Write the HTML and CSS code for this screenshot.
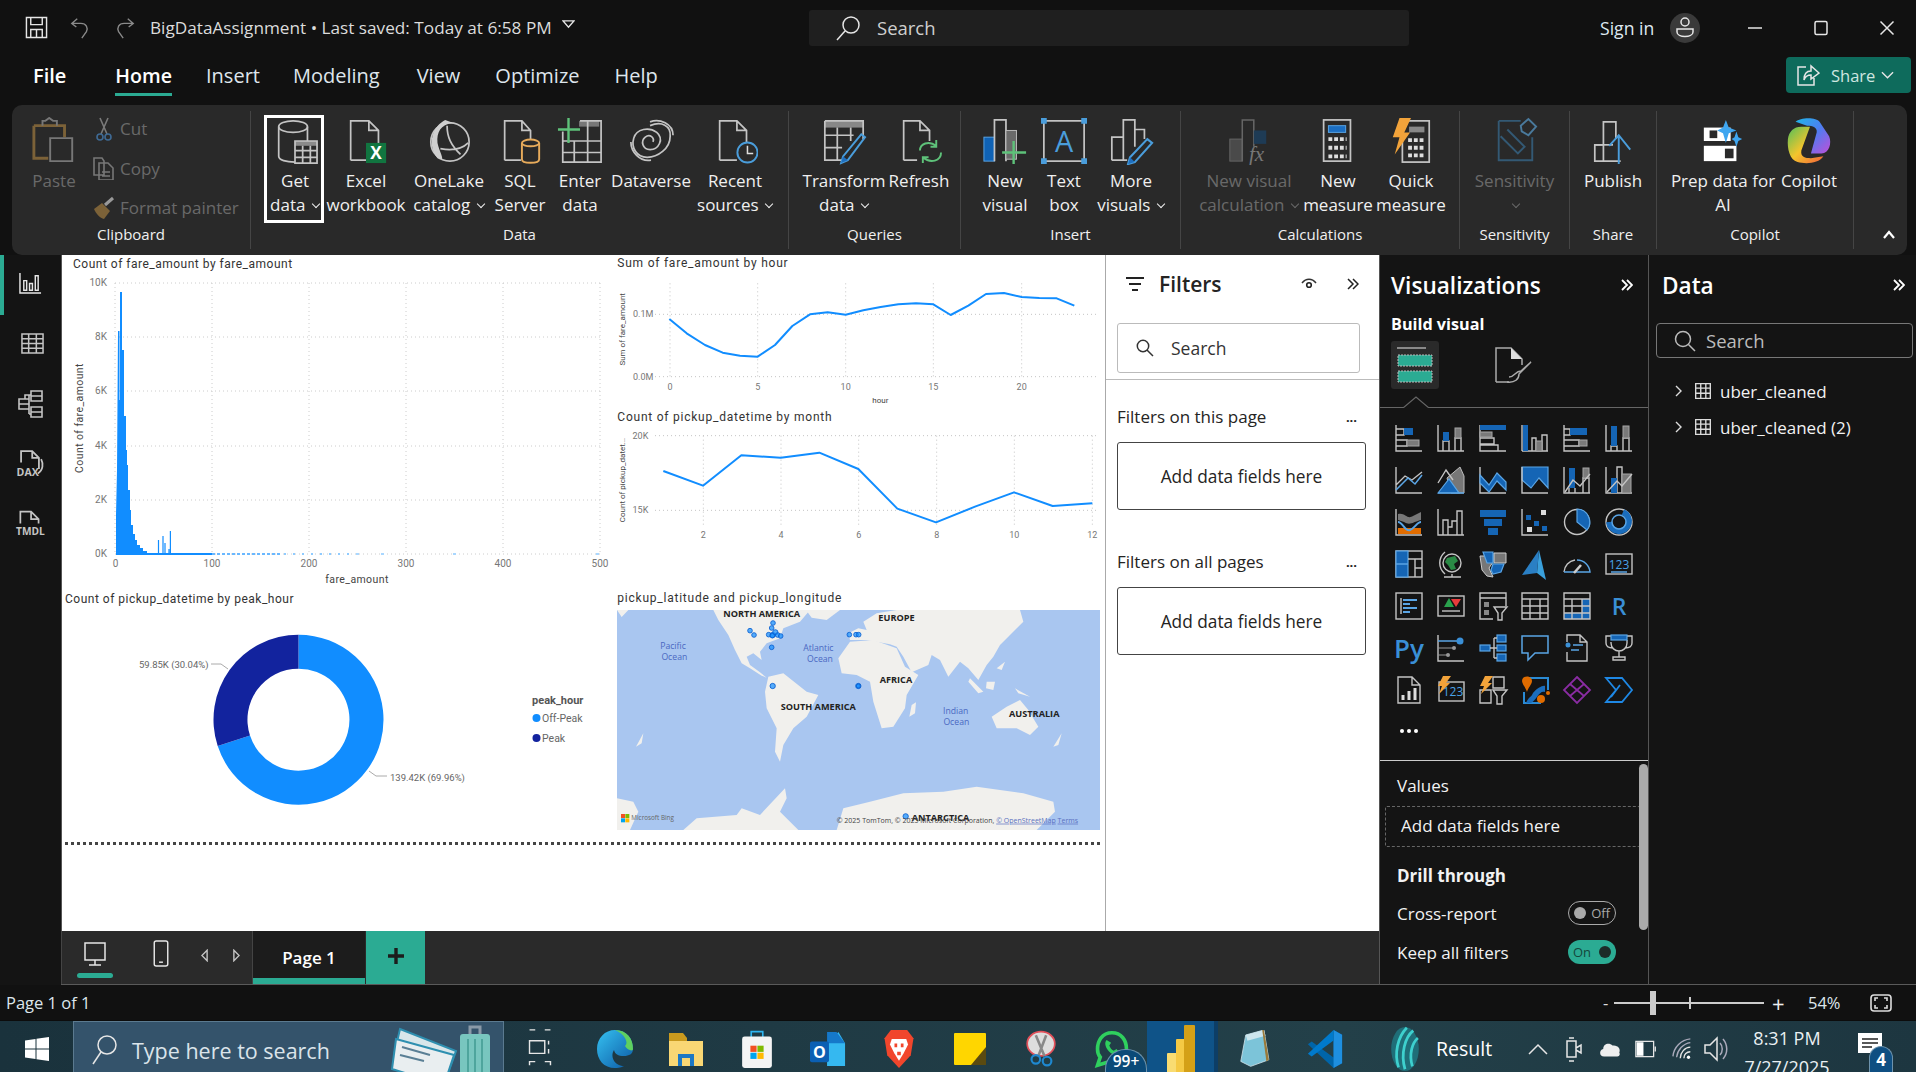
FILE: index.html
```html
<!DOCTYPE html>
<html lang="en">
<head>
<meta charset="utf-8">
<title>BigDataAssignment - Power BI Desktop</title>
<link rel="stylesheet" href="styles.css">
</head>
<body>
<div class="app">
  <header class="titlebar">
    <div class="tb-left">
      <svg class="ic-save" viewBox="0 0 24 24"><path class="w" d="M1.5 1.5H22.5V22.5H1.5ZM6 1.5V9H18V1.5M6 22.5V14H18V22.5M12 14V22"/></svg>
      <svg class="ic-undo" viewBox="0 0 24 24"><path class="dim" d="M9 2L3 7L8 11M3 7H13C19 7 21 12 19 16L14 23"/></svg>
      <svg class="ic-undo" viewBox="0 0 24 24"><path class="dim" d="M15 2L21 7L16 11M21 7H11C5 7 3 12 5 16L10 23"/></svg>
      <span class="doc-title">BigDataAssignment&nbsp;•&nbsp;Last saved: Today at 6:58 PM</span>
      <svg class="ic-drop" viewBox="0 0 14 10"><path class="w" d="M1 1H13L7 8Z"/></svg>
    </div>
    <div class="top-search">
      <svg class="ic-tsearch" viewBox="0 0 26 26"><circle class="w" cx="16" cy="10" r="8"/><path class="w" d="M10 16L2 25"/></svg>
      <span>Search</span>
    </div>
    <div class="tb-right">
      <span class="signin">Sign in</span>
      <span class="avatar"><svg viewBox="0 0 30 30"><circle class="w" cx="15" cy="9" r="4"/><path class="w" d="M7 16H23V19C23 25 7 25 7 19Z"/></svg></span>
      <svg class="win-ctl first" viewBox="0 0 16 16"><path class="w" d="M1 8H15"/></svg>
      <svg class="win-ctl" viewBox="0 0 16 16"><rect class="w" x="2" y="1.5" width="12" height="13" rx="1.5"/></svg>
      <svg class="win-ctl" viewBox="0 0 16 16"><path class="w" d="M1.5 1.5L14.5 14.5M14.5 1.5L1.5 14.5"/></svg>
    </div>
  </header>

  <nav class="tabs">
    <span class="tab file">File</span>
    <span class="tab active">Home</span>
    <span class="tab t-insert">Insert</span>
    <span class="tab t-model">Modeling</span>
    <span class="tab">View</span>
    <span class="tab">Optimize</span>
    <span class="tab">Help</span>
    <span class="share">
      <svg viewBox="0 0 24 24"><path class="w" d="M10 4H2V22H18V15M8 17C8 11 11 8 15 8V3L23 10L15 16V12C12 12 9 14 8 17Z"/></svg>
      <span>Share</span>
      <svg class="share-chev" viewBox="0 0 14 10"><path class="w" d="M1 2L7 8L13 2"/></svg>
    </span>
  </nav>

  <section class="ribbon">
    <div class="group g-clip">
      <div class="btns">
        <div class="btn b-paste dis">
          <svg class="ri" viewBox="0 0 48 48"><path fill="none" stroke="#7c6238" stroke-width="3" d="M3 8H35V20M3 8V42H18"/><path fill="none" stroke="#777" stroke-width="2" d="M12 8V3H15L19 0L23 3H27V8M20 21H43V45H20Z"/></svg>
          <span>Paste</span>
        </div>
        <div class="small-col">
          <div class="small dis"><svg viewBox="0 0 24 24"><path fill="none" stroke="#7a7a7a" stroke-width="1.6" d="M8 1L15 17M16 1L9 17"/><circle cx="8" cy="20" r="3" fill="none" stroke="#3f6a94" stroke-width="1.6"/><circle cx="16" cy="20" r="3" fill="none" stroke="#3f6a94" stroke-width="1.6"/></svg><span>Cut</span></div>
          <div class="small dis"><svg viewBox="0 0 24 24"><path fill="none" stroke="#777" stroke-width="1.6" d="M2 2H10L12 5V19H2ZM7 7H16L21 12V24H7ZM10 16H18M10 20H18"/></svg><span>Copy</span></div>
          <div class="small dis"><svg viewBox="0 0 24 24"><path fill="#7c6238" d="M2 13L10 7L18 15L12 23C8 22 4 18 2 13Z"/><path fill="none" stroke="#999" stroke-width="3" d="M13 9L21 2"/></svg><span>Format painter</span></div>
        </div>
      </div>
      <div class="g-label">Clipboard</div>
    </div>

    <div class="group g-data">
      <div class="btns">
        <div class="btn w66 focus">
          <svg class="ri" viewBox="0 0 48 48"><ellipse class="s" cx="22" cy="9" rx="15" ry="6"/><path class="s" d="M7 9V40C7 44 15 46 24 46M37 9V24"/><rect x="24" y="24" width="23" height="5" fill="#8a8a8a"/><path class="s" d="M24 24H47V47H24ZM24 34H47M24 41H47M32 29V47M40 29V47"/></svg>
          <span>Get<br>data <i class="chev"></i></span>
        </div>
        <div class="btn w76">
          <svg class="ri" viewBox="0 0 48 48"><path class="s" d="M8 44V3H27L37 13V26M8 44H24M27 3V13H37" /><rect x="24" y="26" width="21" height="21" fill="#117540"/><text class="xl" x="34.5" y="43">X</text></svg>
          <span>Excel<br>workbook</span>
        </div>
        <div class="btn w90">
          <svg class="ri" viewBox="0 0 48 48"><circle class="s" cx="25" cy="25" r="20"/><path fill="#cfcfcf" d="M20 2C8 8 0 26 12 42C22 47 14 36 12 26C11 15 15 7 28 5Z"/><path class="s" d="M15 32C26 34 36 34 44 26M22 8C22 20 26 28 36 38"/></svg>
          <span>OneLake<br>catalog <i class="chev"></i></span>
        </div>
        <div class="btn w52">
          <svg class="ri" viewBox="0 0 48 48"><path class="s" d="M8 44V3H26L35 13V22M8 44H25M26 3V13H35"/><ellipse cx="35" cy="26" rx="9" ry="3.5" fill="none" stroke="#e7ab5b" stroke-width="2"/><path fill="none" stroke="#e7ab5b" stroke-width="2" d="M26 26V43C26 48 44 48 44 43V26"/></svg>
          <span>SQL<br>Server</span>
        </div>
        <div class="btn w68">
          <svg class="ri" viewBox="0 0 48 48"><rect x="23" y="3" width="21" height="6" fill="#777"/><path class="s" d="M6 14V46H46V3H24M6 24H46M6 36H46M18 24V46M32 3V46"/><path fill="none" stroke="#5ec27a" stroke-width="2.5" d="M12 0V26M1 12H24"/></svg>
          <span>Enter<br>data</span>
        </div>
        <div class="btn w74">
          <svg class="ri" viewBox="0 0 48 48"><path class="s" d="M23 8C35 3 45 8 44 19C44 32 31 41 20 41C9 41 3 31 6 21C9 11 22 9 30 15C38 22 32 33 23 33C15 33 13 24 18 20C23 16 28 21 26 25"/><path class="s" d="M23 4C33 0 47 6 47 18M3 25C3 35 12 46 24 44"/></svg>
          <span>Dataverse</span>
        </div>
        <div class="btn w94">
          <svg class="ri" viewBox="0 0 48 48"><path class="s" d="M8 44V3H26L36 13V26M8 44H26M26 3V13H36"/><circle cx="37" cy="36" r="10.5" fill="#2a2a2a" stroke="#4a9ddb" stroke-width="2"/><path fill="none" stroke="#ddd" stroke-width="1.6" d="M37 29V37H43"/></svg>
          <span>Recent<br>sources <i class="chev"></i></span>
        </div>
      </div>
      <div class="g-label">Data</div>
    </div>

    <div class="group g-query">
      <div class="btns">
        <div class="btn w84">
          <svg class="ri" viewBox="0 0 48 48"><rect x="4" y="3" width="40" height="7" fill="#888"/><path class="s" d="M4 3H44V22M4 3V44H22M4 18H34M4 31H22M17 10V44M31 10V24"/><path fill="none" stroke="#4a9ddb" stroke-width="2" d="M42 17L46 20L28 44L21 47L23 40Z"/><path fill="#1e6fc0" d="M21 47L23 40L28 44Z"/></svg>
          <span>Transform<br>data <i class="chev"></i></span>
        </div>
        <div class="btn w66">
          <svg class="ri" viewBox="0 0 48 48"><path class="s" d="M8 44V3H25L35 13V24M8 44H22M25 3V13H35"/><path fill="none" stroke="#5ec27a" stroke-width="2" d="M25 34C25 27 34 23 42 29M47 36C47 45 36 48 28 41M42 23V30H36M28 47V41H34"/></svg>
          <span>Refresh</span>
        </div>
      </div>
      <div class="g-label">Queries</div>
    </div>

    <div class="group g-insert">
      <div class="btns">
        <div class="btn w68">
          <svg class="ri" viewBox="0 0 48 48"><rect x="2" y="20" width="11" height="25" fill="#0f62b5" stroke="#5aa5e5"/><path class="s" d="M13 45V2H25V45"/><rect x="25" y="13" width="11" height="30" fill="#6a6a6a" stroke="#bbb"/><path fill="none" stroke="#5ec27a" stroke-width="2.5" d="M33 24V48M21 36H46"/></svg>
          <span>New<br>visual</span>
        </div>
        <div class="btn w50">
          <svg class="ri" viewBox="0 0 48 48"><rect class="s" x="3" y="3" width="42" height="42"/><rect x="0" y="0" width="6" height="6" fill="#4a9ddb"/><rect x="42" y="0" width="6" height="6" fill="#4a9ddb"/><rect x="0" y="42" width="6" height="6" fill="#4a9ddb"/><rect x="42" y="42" width="6" height="6" fill="#4a9ddb"/><text class="aa" x="24" y="35">A</text></svg>
          <span>Text<br>box</span>
        </div>
        <div class="btn w84">
          <svg class="ri" viewBox="0 0 48 48"><path class="s" d="M4 44V20H16M16 44V2H28V30M28 12H38V22M4 44H20"/><path fill="none" stroke="#4a9ddb" stroke-width="2.2" d="M41 22L46 26L28 46L21 48L23 41Z"/><path fill="#1e6fc0" d="M21 48L23 41L28 46Z"/></svg>
          <span>More<br>visuals <i class="chev"></i></span>
        </div>
      </div>
      <div class="g-label">Insert</div>
    </div>

    <div class="group g-calc">
      <div class="btns">
        <div class="btn w116 dis">
          <svg class="ri" viewBox="0 0 48 48"><rect x="4" y="22" width="13" height="23" fill="#4a4a4a" stroke="#666"/><path fill="none" stroke="#666" stroke-width="1.6" d="M17 45V2H29V30"/><rect x="29" y="13" width="13" height="14" fill="#1e3b55"/><text class="fx" x="24" y="45">fx</text></svg>
          <span>New visual<br>calculation <i class="chev"></i></span>
        </div>
        <div class="btn w62">
          <svg class="ri" viewBox="0 0 48 48"><rect class="s" x="9" y="2" width="28" height="43"/><rect x="14" y="8" width="18" height="7" fill="#1b6ec2" stroke="#5aa5e5"/><path stroke="#ddd" stroke-width="4" stroke-dasharray="4 2" d="M14 22H33M14 31H33M14 40H33"/></svg>
          <span>New<br>measure</span>
        </div>
        <div class="btn w84">
          <svg class="ri" viewBox="0 0 48 48"><rect class="s" x="15" y="3" width="28" height="43"/><rect x="22" y="9" width="16" height="6" fill="#888"/><path stroke="#ddd" stroke-width="4" stroke-dasharray="4 2" d="M21 23H39M21 31H39M21 39H39"/><path fill="#f2a33a" d="M12 0H24L17 15H23L7 38L12 20H5Z"/></svg>
          <span>Quick<br>measure</span>
        </div>
      </div>
      <div class="g-label">Calculations</div>
    </div>

    <div class="group g-sens">
      <div class="btns">
        <div class="btn wfull dis">
          <svg class="ri" viewBox="0 0 48 48"><path fill="none" stroke="#335974" stroke-width="2" d="M7 3H30M42 20V44H7V3M16 12L34 30L27 37L9 19"/><path fill="none" stroke="#4a7a9c" stroke-width="2" d="M30 8L38 1L46 9L38 18L31 14Z"/></svg>
          <span>Sensitivity<br><i class="chev"></i></span>
        </div>
      </div>
      <div class="g-label">Sensitivity</div>
    </div>

    <div class="group g-share">
      <div class="btns">
        <div class="btn wfull">
          <svg class="ri" viewBox="0 0 48 48"><path class="s" d="M5 45V28H14V45ZM14 45V4H27V22M14 45H32"/><path class="s" d="M5 28H24"/><path fill="none" stroke="#4a9ddb" stroke-width="2" d="M30 48V18M20 29L30 18L42 33"/></svg>
          <span>Publish</span>
        </div>
      </div>
      <div class="g-label">Share</div>
    </div>

    <div class="group g-copilot">
      <div class="btns">
        <div class="btn w126">
          <svg class="ri" viewBox="0 0 48 48"><rect x="4" y="10" width="28" height="14" fill="#fff"/><rect x="4" y="29" width="34" height="16" fill="#fff"/><rect x="10" y="13" width="8" height="8" fill="#2a2a2a"/><rect x="26" y="32" width="9" height="10" fill="#2a2a2a"/><path fill="#3fa6f0" d="M27 2L30 10L38 13L30 16L27 26L24 16L18 13L24 10Z"/><path fill="#3fa6f0" d="M38 14L40 20L44 22L40 24L38 30L36 24L33 22L36 20Z"/></svg>
          <span>Prep data for<br>AI</span>
        </div>
        <div class="btn w46">
          <svg class="ri" viewBox="0 0 48 48"><defs><linearGradient id="cp1" x1="0" y1="0" x2="1" y2="1"><stop offset="0" stop-color="#1fb6e8"/><stop offset=".5" stop-color="#4f7cf0"/><stop offset="1" stop-color="#c04fd8"/></linearGradient><linearGradient id="cp2" x1="0" y1="0" x2="1" y2="1"><stop offset="0" stop-color="#52c05a"/><stop offset=".5" stop-color="#f4c52c"/><stop offset="1" stop-color="#f0603a"/></linearGradient></defs><path fill="url(#cp1)" d="M10 4C15-1 32-1 35 4L45 19C48 26 45 37 37 37H26L32 15C33 10 28 8 22 8Z"/><path fill="url(#cp2)" d="M2 22C3 14 8 9 16 9H25L16 34C15 41 20 42 26 42L39 40C34 48 20 48 12 46C4 44 1 32 2 22Z"/></svg>
          <span class="nw">Copilot</span>
        </div>
      </div>
      <div class="g-label">Copilot</div>
    </div>

    <div class="collapse"><svg viewBox="0 0 14 10"><path fill="none" stroke="#fff" stroke-width="2.2" d="M2 8L7 2L12 8"/></svg></div>
  </section>

  <main class="main">
    <aside class="leftnav">
      <div class="nav-item on"><svg viewBox="0 0 24 24"><path class="w" d="M1 1V22H23M5 9H8V19H5ZM11 12H14V19H11ZM17 4H20V19H17Z"/></svg></div>
      <div class="nav-item"><svg viewBox="0 0 24 24"><path class="g" d="M1 2H23V22H1ZM1 7H23M1 12H23M1 17H23M8 2V22M16 2V22"/></svg></div>
      <div class="nav-item nav-model"><svg viewBox="0 0 26 28"><path class="g" d="M2 9H12V19H2ZM2 14H12M12 5V24M8 9V5H12H14M12 24H14M14 1H25V11H14ZM14 6H25M14 17H25V27H14ZM14 22H25"/></svg></div>
      <div class="nav-item nav-doc"><svg viewBox="0 0 26 26"><path class="g" d="M5 12V2H15L21 8V18M15 2V8H21M23 9C25 13 25 19 20 22"/><text class="navt" x="1" y="24">DAX</text></svg></div>
      <div class="nav-item nav-doc"><svg viewBox="0 0 28 26"><path class="g" d="M5 13V2H15L22 9V13M15 2V9H22"/><text class="navt" x="1" y="24">TMDL</text></svg></div>
    </aside>

    <div class="center">
      <div class="report-row">
        <div class="canvas">
          <svg class="visual v-hist" viewBox="65 256 545 334">
            <text class="title" x="73" y="268">Count of fare_amount by fare_amount</text>
            <path class="grid" d="M115 283H600M115 337H600M115 391H600M115 446H600M115 500H600M115 554H600M115 283V554M212 283V554M309 283V554M406 283V554M503 283V554M600 283V554"/>
            <g class="axis ar">
              <text x="107" y="286">10K</text><text x="107" y="340">8K</text><text x="107" y="394">6K</text><text x="107" y="449">4K</text><text x="107" y="503">2K</text><text x="107" y="557">0K</text>
            </g>
            <g class="axis am">
              <text x="115.5" y="567">0</text><text x="212" y="567">100</text><text x="309" y="567">200</text><text x="406" y="567">300</text><text x="503" y="567">400</text><text x="600" y="567">500</text>
            </g>
            <text class="axis-title am" x="357" y="583">fare_amount</text>
            <text class="axis-title am" transform="translate(83 418) rotate(-90)">Count of fare_amount</text>
            <path fill="#118dff" d="M116 555V515L117 470L118 331H119.5V400H120V292H122V350H124V416H126V450H127V465H128V490H130V510H131V525H133V534H135V540H137V545H140V548H143V551H147V553H212V555Z"/>
            <path stroke="#118dff" stroke-width="1.2" d="M158.5 554V540M163 554V536M165 554V543M170.4 554V531M169 554V549"/>
            <path stroke="#6ab8ff" stroke-width="2" stroke-dasharray="3 2" d="M212 554H282"/>
            <path stroke="#8fcbff" stroke-width="2" stroke-dasharray="2 7" d="M284 554H350"/>
            <path stroke="#a9d7ff" stroke-width="2" d="M356 554H359M381 554H384M453 554H456M596 554H599"/>
          </svg>

          <svg class="visual v-lines" viewBox="0 18 1485 1002">
            <text class="title3" x="22" y="52">Sum of fare_amount by hour</text>
            <path class="grid3" d="M135 193H1465M135 380H1465M180 100V380M443 100V380M707 100V380M970 100V380M1235 100V380"/>
            <g class="axis3 ar"><text x="130" y="200">0.1M</text><text x="130" y="390">0.0M</text></g>
            <g class="axis3 am"><text x="180" y="420">0</text><text x="443" y="420">5</text><text x="707" y="420">10</text><text x="970" y="420">15</text><text x="1235" y="420">20</text></g>
            <text class="axt3 am" x="811" y="458">hour</text>
            <text class="axt3 am" transform="translate(45 238) rotate(-90)">Sum of fare_amount</text>
            <polyline class="line3" points="178,207 230,250 285,285 338,308 390,317 443,320 495,285 547,228 600,193 653,187 707,194 760,181 812,171 865,163 918,160 970,163 1022,195 1075,167 1128,132 1182,129 1235,141 1288,144 1340,145 1393,167"/>

            <text class="title3" x="22" y="512">Count of pickup_datetime by month</text>
            <path class="grid3" d="M135 557H1460M135 781H1460M280 557V830M513 557V830M746 557V830M980 557V830M1213 557V830M1447 557V830"/>
            <g class="axis3 ar"><text x="115" y="566">20K</text><text x="115" y="788">15K</text></g>
            <g class="axis3 am"><text x="280" y="863">2</text><text x="513" y="863">4</text><text x="746" y="863">6</text><text x="980" y="863">8</text><text x="1213" y="863">10</text><text x="1447" y="863">12</text></g>
            <text class="axt3 am" transform="translate(45 690) rotate(-90)">Count of pickup_datet...</text>
            <polyline class="line3" points="160,663 279,707 394,616 512,623 628,608 745,657 862,776 978,817 1095,770 1212,727 1328,768 1447,760"/>
          </svg>

          <svg class="visual v-donut" viewBox="65 585 545 250">
            <text class="title" x="65" y="603">Count of pickup_datetime by peak_hour</text>
            <path fill="#118dff" d="M298.5 634.7A85 85 0 1 1 217.7 746.1L250 735.6A51 51 0 1 0 298.5 668.7Z"/>
            <path fill="#12239e" d="M298.5 634.7A85 85 0 0 0 217.7 746.1L250 735.6A51 51 0 0 1 298.5 668.7Z"/>
            <path class="leader" d="M211 664H221L228 669M369 771L376 776H387"/>
            <text class="dl" x="139" y="668">59.85K (30.04%)</text>
            <text class="dl" x="390" y="781">139.42K (69.96%)</text>
            <text class="lg-t" x="532" y="704">peak_hour</text>
            <circle cx="536.5" cy="718" r="4" fill="#118dff"/><text class="lg" x="542" y="722">Off-Peak</text>
            <circle cx="536.5" cy="738" r="4" fill="#12239e"/><text class="lg" x="542" y="742">Peak</text>
          </svg>

          <svg class="visual v-map" viewBox="0 0 1485 795">
            <text class="title3" x="22" y="52">pickup_latitude and pickup_longitude</text>
            <rect x="21" y="75" width="1449" height="660" fill="#a9c6f0"/>
            <g fill="#f1f0ed">
              <path d="M21 75H55L35 96ZM310 75H600L570 110L520 130L510 160L470 175L450 200L455 225L430 205L410 215L420 240L450 262L470 278L455 272L420 250L395 235L375 195L355 150L325 105Z"/>
              <path d="M588 75H690L650 105L605 98Z"/>
              <path d="M760 110L800 85L860 75H1230L1240 110L1200 150L1170 180L1150 215L1130 240L1105 285L1075 250L1050 230L1015 275L990 225L965 210L955 240L905 262L880 215L860 185L840 178L770 165L720 165L715 145L745 130L770 135Z"/>
              <path d="M720 170L790 165L860 190L885 245L925 270L890 330L885 370L850 425L815 430L790 350L780 290L740 270L695 265L685 220Z"/>
              <path d="M475 275L520 265L590 320L625 330L590 395L550 430L520 480L510 530L495 500L500 430L470 370L465 320Z"/>
              <path d="M1145 395L1190 365L1230 345L1255 375L1285 425L1260 450L1220 430L1160 430Z"/>
              <path d="M905 360L918 352L915 385L898 395ZM1080 280L1120 320L1105 325L1075 290ZM1130 290H1155L1150 315L1128 310ZM1215 310L1260 335L1225 325ZM1160 250L1185 230L1175 255ZM1355 445L1330 485L1345 480ZM100 445L78 485L95 475Z"/>
              <path d="M680 735L700 670L780 650L880 625L1000 620L1100 605L1240 625L1330 650L1335 680L1280 735Z"/>
              <path d="M220 735L260 700L380 690L395 670L450 690L525 610L530 640L510 680L565 735Z"/>
              <path d="M21 640L70 650L85 680L60 735H21Z"/>
            </g>
            <g class="mapt">
              <text x="340" y="95">NORTH AMERICA</text><text x="805" y="109">EUROPE</text><text x="809" y="295">AFRICA</text><text x="512" y="374">SOUTH AMERICA</text><text x="1197" y="395">AUSTRALIA</text><text x="905" y="707">ANTARCTICA</text>
            </g>
            <g class="ocean">
              <text x="189" y="192">Pacific</text><text x="193" y="225">Ocean</text><text x="625" y="198">Atlantic</text><text x="630" y="231">Ocean</text><text x="1037" y="388">Indian</text><text x="1039" y="420">Ocean</text>
            </g>
            <g class="dots">
              <circle cx="420" cy="137" r="7"/><circle cx="432" cy="150" r="7"/><circle cx="489" cy="114" r="7"/><circle cx="485" cy="129" r="7"/><circle cx="476" cy="149" r="7"/><circle cx="488" cy="150" r="8"/><circle cx="496" cy="142" r="8"/><circle cx="487" cy="152" r="7"/><circle cx="503" cy="150" r="7"/><circle cx="512" cy="153" r="7"/><circle cx="485" cy="187" r="7"/><circle cx="718" cy="149" r="7"/><circle cx="738" cy="149" r="7"/><circle cx="746" cy="149" r="7"/><circle cx="488" cy="303" r="8"/><circle cx="745" cy="303" r="8"/><circle cx="745" cy="303" r="6"/><circle cx="887" cy="694" r="8"/>
            </g>
            <rect x="33" y="687" width="12" height="12" fill="#f25022"/><rect x="46" y="687" width="12" height="12" fill="#7fba00"/><rect x="33" y="700" width="12" height="12" fill="#00a4ef"/><rect x="46" y="700" width="12" height="12" fill="#ffb900"/>
            <text class="bing" x="64" y="706">Microsoft Bing</text>
            <text class="attr" x="680" y="713">© 2025 TomTom, © 2025 Microsoft Corporation, <tspan class="lnk">© OpenStreetMap</tspan>  <tspan class="lnk">Terms</tspan></text>
          </svg>

          <div class="page-rule"></div>
        </div>

        <aside class="filters">
          <div class="f-head">
            <svg class="f-ic" viewBox="0 0 20 16"><path stroke="#222" stroke-width="2.2" d="M1 2H19M4 8H16M7 14H13"/></svg>
            <span class="f-title">Filters</span>
            <svg class="f-eye" viewBox="0 0 16 12"><path fill="none" stroke="#333" stroke-width="1.5" d="M1 5C5 0 11 0 15 5"/><circle cx="8" cy="7" r="2.3" fill="none" stroke="#222" stroke-width="1.6"/></svg>
            <svg class="f-chev" viewBox="0 0 12 12"><path fill="none" stroke="#222" stroke-width="1.5" d="M1 1L6 6L1 11M6 1L11 6L6 11"/></svg>
          </div>
          <div class="f-search">
            <svg viewBox="0 0 18 18"><circle cx="7" cy="7" r="5.7" fill="none" stroke="#333" stroke-width="1.5"/><path stroke="#333" stroke-width="1.5" d="M11 11L17 17"/></svg>
            <span>Search</span>
          </div>
          <div class="f-rule"></div>
          <div class="f-label"><span>Filters on this page</span><span class="f-more">...</span></div>
          <div class="f-well">Add data fields here</div>
          <div class="f-label second"><span>Filters on all pages</span><span class="f-more">...</span></div>
          <div class="f-well">Add data fields here</div>
        </aside>
      </div>

      <div class="pagebar">
        <div class="views">
          <span class="view on"><svg viewBox="0 0 24 24"><path class="w" d="M2 1H22V18H2ZM12 18V23M6 23H18"/></svg></span>
          <span class="view phone"><svg viewBox="0 0 16 28"><rect class="w" x="1" y="1" width="14" height="26" rx="2"/><path class="w" d="M6 23H10"/></svg></span>
          <svg class="arr first-arr" viewBox="0 0 8 14"><path class="g" d="M7 1L1 7L7 13Z"/></svg>
          <svg class="arr" viewBox="0 0 8 14"><path class="g" d="M1 1L7 7L1 13Z"/></svg>
        </div>
        <div class="page-tab">Page 1</div>
        <div class="add-page"><svg viewBox="0 0 16 16"><path stroke="#1c1c1c" stroke-width="3.4" d="M8 0V16M0 8H16"/></svg></div>
      </div>
    </div>

    <aside class="viz">
      <div class="pane-head"><span>Visualizations</span><svg viewBox="0 0 12 12"><path fill="none" stroke="#fff" stroke-width="1.8" d="M1 1L6 6L1 11M6 1L11 6L6 11"/></svg></div>
      <div class="build">Build visual</div>
      <div class="build-tabs">
        <span class="bt-on"><svg viewBox="0 0 36 36"><path stroke="#aaa" stroke-width="1.5" d="M0 1H29"/><rect x="1" y="8" width="34" height="11" fill="#2bab93" stroke="#bbb" stroke-dasharray="2 1"/><rect x="1" y="24" width="34" height="11" fill="#2bab93" stroke="#bbb" stroke-dasharray="2 1"/></svg></span>
        <svg class="bt-fmt" viewBox="0 0 38 36"><path fill="none" stroke="#aaa" stroke-width="1.5" d="M1 35V1H16L27 12V18M1 35H14"/><path fill="#ddd" d="M16 1L27 12H16Z"/><path fill="none" stroke="#aaa" stroke-width="1.5" d="M12 35C20 36 24 32 24 27L36 15L26 24C20 24 20 30 14 30"/></svg>
      </div>
      <div class="viz-rule"><svg viewBox="0 0 26 12"><path fill="#141414" stroke="#666" stroke-width="1.2" d="M0 12L13 1L26 12"/></svg></div>

      <div class="viz-grid">
        <svg viewBox="0 0 28 28"><path class="o" d="M1 1V27H27M1 5H9V11H1M1 16H12V22H1"/><rect class="bf" x="9" y="4" width="9" height="7"/><rect class="gf" x="12" y="16" width="12" height="6"/></svg>
        <svg viewBox="0 0 28 28"><path class="o" d="M1 1V27H27M6 27V17H12V27M18 27V14H24V27"/><rect class="bf" x="6" y="8" width="6" height="9"/><rect class="gf" x="18" y="4" width="6" height="10"/></svg>
        <svg viewBox="0 0 28 28"><path class="o" d="M1 1V27H27M1 14H15V20H1M1 21H19V27"/><rect class="bf" x="1" y="1" width="26" height="5"/><rect class="gf" x="1" y="8" width="12" height="5"/></svg>
        <svg viewBox="0 0 28 28"><path class="o" d="M1 27H27M11 27V14H15V27M21 27V11H26V27"/><rect class="bf" x="2" y="1" width="5" height="26"/><path class="o" d="M1 1V27"/><rect class="gf" x="15" y="17" width="6" height="10"/></svg>
        <svg viewBox="0 0 28 28"><path class="o" d="M1 1V27H27M1 5H7V11H1M1 16H16V22H1"/><rect class="bf" x="7" y="4" width="17" height="7"/><rect class="gf" x="16" y="16" width="8" height="6"/></svg>
        <svg viewBox="0 0 28 28"><path class="o" d="M1 1V27H27M6 27V22H12V27M18 27V14H24V27"/><rect class="bf" x="6" y="2" width="6" height="20"/><rect class="gf" x="18" y="2" width="6" height="12"/></svg>

        <svg viewBox="0 0 28 28"><path class="o" d="M1 1V27H27M1 19L10 10L17 14L27 6"/><path class="lb" d="M1 24L13 12L20 18L27 9"/></svg>
        <svg viewBox="0 0 28 28"><path fill="#777" stroke="#bbb" d="M10 12L23 1L27 10V27H14Z"/><path class="o" d="M1 17L9 4L16 14"/><path class="bf ls" d="M1 27L12 13L22 27Z"/><path class="lb" d="M1 27H27"/></svg>
        <svg viewBox="0 0 28 28"><path class="o" d="M1 1V27H27"/><path class="bf ls" d="M1 9L10 19L18 7L27 16V24L18 15L10 26L1 17Z"/></svg>
        <svg viewBox="0 0 28 28"><path class="bf ls" d="M1 1H27V22L18 12L10 22L1 14Z"/><path class="o" d="M1 1V27H27"/></svg>
        <svg viewBox="0 0 28 28"><path class="o" d="M1 1V27H27M6 27V22M12 27V22M20 27V12H26V27"/><rect class="bf" x="6" y="2" width="6" height="20"/><rect class="gf" x="20" y="2" width="6" height="10"/><path class="o" d="M2 26L10 14L17 20L27 8"/></svg>
        <svg viewBox="0 0 28 28"><path class="o" d="M1 1V27H27M12 27V1H17V27"/><rect class="bf" x="6" y="12" width="6" height="15"/><rect class="gf" x="17" y="8" width="9" height="19"/><path class="o" d="M2 26L12 15L17 20L27 8"/></svg>

        <svg viewBox="0 0 28 28"><path class="o" d="M1 1V27H27"/><path fill="#777" d="M3 6C10 4 12 12 18 8L26 4V12C18 14 15 18 9 14L3 12Z"/><path fill="#e06c00" d="M3 20H26V26H3Z"/><path fill="none" stroke="#5aa5e5" stroke-width="2" d="M3 14C8 14 10 24 15 22C20 20 22 14 26 14"/></svg>
        <svg viewBox="0 0 28 28"><path class="o" d="M1 1V27H27M6 27V12H11V27M11 27V19H15V13H20V27M20 13V3H25V27"/></svg>
        <svg viewBox="0 0 28 28"><rect class="bf" x="1" y="2" width="26" height="7" /><rect class="bf" x="5" y="11" width="18" height="7"/><rect class="bf" x="9" y="20" width="10" height="7"/></svg>
        <svg viewBox="0 0 28 28"><path class="o" d="M1 1V27H27"/><rect class="bf" x="5" y="7" width="5" height="5"/><rect x="20" y="2" width="5" height="5" fill="#ddd"/><rect x="6" y="19" width="5" height="5" fill="#ddd"/><rect class="bf" x="13" y="13" width="5" height="5"/><rect class="bf" x="21" y="18" width="5" height="5"/></svg>
        <svg viewBox="0 0 28 28"><circle class="o" cx="14" cy="14" r="12.5"/><path class="bf ls" d="M14 1A13 13 0 0 1 24 22L14 14Z"/></svg>
        <svg viewBox="0 0 28 28"><circle class="o" cx="14" cy="14" r="13"/><path fill="none" stroke="#1a6dbd" stroke-width="6" d="M18 4A10 10 0 1 1 4 14"/><circle class="lb" cx="14" cy="14" r="7"/></svg>

        <svg viewBox="0 0 28 28"><rect class="o" x="1" y="1" width="26" height="26"/><rect class="bf ls" x="1" y="1" width="12" height="26"/><path class="lb" d="M1 14H13"/><path class="o" d="M13 9H27M20 9V27M20 18H27"/></svg>
        <svg viewBox="0 0 28 28"><circle class="o" cx="15" cy="13" r="9"/><path fill="#2a8a45" d="M10 8L18 6L21 11L17 14L19 19L14 20L11 15L8 12Z"/><path class="o" d="M8 2C1 8 1 18 8 24M15 24V27M7 27H24"/></svg>
        <svg viewBox="0 0 28 28"><path fill="#777" stroke="#ccc" d="M1 6H6L7 3H14V12L10 18L14 27L8 26L3 20Z"/><path fill="#777" stroke="#ccc" d="M15 3H27V13H15Z"/><path class="bf ls" d="M4 2H14V13H8ZM14 14H25L22 22L14 24L12 20Z"/></svg>
        <svg viewBox="0 0 28 28"><path fill="#3aa0dc" d="M18 0L25 30L16 23Z"/><path fill="#2a7fc4" d="M18 0L1 25L16 23Z"/></svg>
        <svg viewBox="0 0 28 28"><path class="o" d="M1 22A13 13 0 0 1 12 10"/><path class="lb" d="M14 10A13 13 0 0 1 27 22H1"/><path stroke="#ccc" stroke-width="2.5" d="M11 23L18 15"/></svg>
        <svg viewBox="0 0 28 28"><rect class="o" x="1" y="4" width="26" height="20"/><text class="n123" x="14" y="19">123</text><path class="lb" d="M6 22H22"/></svg>

        <svg viewBox="0 0 28 28"><rect class="o" x="1" y="1" width="26" height="26"/><path class="o" d="M6 6V22"/><path stroke="#5aa5e5" stroke-width="2" d="M8 8H22M8 12H15M8 16H22M8 20H15"/></svg>
        <svg viewBox="0 0 28 28"><rect class="o" x="1" y="4" width="26" height="20"/><path fill="#2aa14d" d="M7 15L12 6L17 15Z"/><path fill="#e83b3b" d="M14 7H24L19 15Z"/><path class="o" d="M5 19H23"/></svg>
        <svg viewBox="0 0 28 28"><path class="o" d="M14 27H1V1H27V14M1 6H27"/><rect x="5" y="10" width="5" height="5" fill="#888"/><rect x="5" y="18" width="5" height="5" fill="#888"/><path class="o" d="M15 15H28L23 21V28H19V21Z"/></svg>
        <svg viewBox="0 0 28 28"><path class="o" d="M1 1H27V27H1ZM1 7H27M1 14H27M1 21H27M9 7V27M19 7V27"/></svg>
        <svg viewBox="0 0 28 28"><rect class="bf" x="19" y="7" width="8" height="20"/><rect class="bf" x="1" y="21" width="18" height="6"/><path class="o" d="M1 1H27V27H1ZM1 7H27M1 14H27M1 21H27M9 7V27M19 7V27"/></svg>
        <span class="lang r">R</span>

        <span class="lang py">Py</span>
        <svg viewBox="0 0 28 28"><path class="o" d="M1 1V27H27"/><path class="lb" d="M1 7H21"/><circle cx="23" cy="7" r="3.5" fill="#3a8fd6"/><path stroke="#999" d="M1 14H16M1 21H10"/><circle cx="17" cy="14" r="2" fill="#999"/><circle cx="11" cy="21" r="2" fill="#999"/></svg>
        <svg viewBox="0 0 28 28"><rect class="bf ls" x="1" y="11" width="10" height="6"/><rect class="bf ls" x="18" y="1" width="9" height="7"/><rect class="bf ls" x="18" y="11" width="9" height="6"/><rect class="bf ls" x="18" y="20" width="9" height="7"/><path class="o" d="M11 14H18M15 4V24M15 4H18M15 24H18"/></svg>
        <svg viewBox="0 0 28 28"><path class="lb" d="M1 2H27V19H14L7 26V19H1Z"/></svg>
        <svg viewBox="0 0 28 28"><path class="o" d="M4 8V1H17L24 8V27H4V18M17 1V8H24"/><circle cx="5" cy="11" r="2.5" fill="#3a8fd6"/><path class="lb" d="M10 11H20M8 16H16"/></svg>
        <svg viewBox="0 0 28 28"><path class="o" d="M6 2H1V9C1 13 5 14 8 14M22 2H27V9C27 13 23 14 20 14M14 17V23M8 26H20V23H8ZM6 8V9C6 14 10 17 14 17C18 17 22 14 22 9V6"/><rect class="bf ls" x="6" y="1" width="16" height="5"/></svg>

        <svg viewBox="0 0 28 28"><path class="o" d="M3 1H17L25 9V27H3ZM17 1V9H25"/><path stroke="#ddd" stroke-width="3" d="M8 24V19M14 24V15M20 24V12"/></svg>
        <svg viewBox="0 0 28 28"><rect class="o" x="2" y="6" width="25" height="19"/><text class="n123" x="16" y="20">123</text><path fill="#f2a33a" d="M6 0H14L9 7H13L2 18L5 10H1Z"/></svg>
        <svg viewBox="0 0 28 28"><path class="o" d="M14 1H25V12H14ZM1 14H12V27H1ZM14 14H28L23 20V28H18V20Z"/><path fill="#f2a33a" d="M6 0H14L9 7H13L2 18L5 10H1Z"/></svg>
        <svg viewBox="0 0 28 28"><path fill="none" stroke="#2a8ad4" stroke-width="2" d="M8 2H27V14M3 16V27H20"/><path fill="#1a6dbd" d="M5 27C8 20 10 22 12 17C16 12 22 9 24 10L24 16C18 14 16 24 10 27Z"/><path fill="#e06c00" d="M1 5C1-1 11-1 11 5C11 8 7 12 6 16C5 12 1 8 1 5Z"/><circle cx="20" cy="23" r="4" fill="#e06c00"/><circle cx="27" cy="17" r="2" fill="#e06c00"/></svg>
        <svg viewBox="0 0 28 28"><path fill="none" stroke="#8a2ca3" stroke-width="1.8" d="M14 1L27 14L14 27L1 14ZM7 8L21 20M21 8L7 20"/></svg>
        <svg viewBox="0 0 28 28"><path fill="none" stroke="#1e88e5" stroke-width="1.8" d="M1 2H17L27 14L17 26H1L11 14ZM6 21L15 9"/></svg>
      </div>
      <div class="viz-more"><i></i><i></i><i></i></div>
      <div class="well-rule"></div>
      <div class="sec-label">Values</div>
      <div class="dash-well">Add data fields here</div>
      <div class="sec-bold">Drill through</div>
      <div class="toggle-row r1"><span>Cross-report</span><span class="toggle off"><i></i>Off</span></div>
      <div class="toggle-row r2"><span>Keep all filters</span><span class="toggle on">On<i></i></span></div>
      <div class="v-scroll"></div>
    </aside>

    <aside class="data">
      <div class="pane-head"><span>Data</span><svg viewBox="0 0 12 12"><path fill="none" stroke="#fff" stroke-width="1.8" d="M1 1L6 6L1 11M6 1L11 6L6 11"/></svg></div>
      <div class="d-search"><svg viewBox="0 0 22 22"><circle cx="9" cy="9" r="7.5" fill="none" stroke="#bbb" stroke-width="1.5"/><path stroke="#bbb" stroke-width="1.5" d="M14.5 14.5L21 21"/></svg><span>Search</span></div>
      <div class="d-row first"><svg class="d-ch" viewBox="0 0 8 12"><path fill="none" stroke="#ddd" stroke-width="1.4" d="M1 1L6 6L1 11"/></svg><svg class="d-tb" viewBox="0 0 16 16"><path fill="none" stroke="#ddd" stroke-width="1.2" d="M1.5 1.5H14.5V14.5H1.5ZM1.5 5.5H14.5M1.5 10H14.5M6 1.5V14.5M10.5 1.5V14.5"/></svg><span>uber_cleaned</span></div>
      <div class="d-row"><svg class="d-ch" viewBox="0 0 8 12"><path fill="none" stroke="#ddd" stroke-width="1.4" d="M1 1L6 6L1 11"/></svg><svg class="d-tb" viewBox="0 0 16 16"><path fill="none" stroke="#ddd" stroke-width="1.2" d="M1.5 1.5H14.5V14.5H1.5ZM1.5 5.5H14.5M1.5 10H14.5M6 1.5V14.5M10.5 1.5V14.5"/></svg><span>uber_cleaned (2)</span></div>
    </aside>
  </main>

  <footer class="status">
    <span class="page-count">Page 1 of 1</span>
    <div class="zoomer">
      <span class="zm">-</span>
      <div class="slider"><i class="thumb"></i><i class="tick"></i></div>
      <span class="zp">+</span>
      <span class="zpct">54%</span>
      <svg class="fit" viewBox="0 0 22 18"><rect x="1" y="1" width="20" height="16" rx="3" fill="none" stroke="#ddd" stroke-width="1.6"/><path fill="none" stroke="#ddd" stroke-width="1.6" d="M5 7V4H8M14 4H17V7M17 11V14H14M8 14H5V11"/></svg>
    </div>
  </footer>

  <div class="taskbar">
    <div class="start"><svg viewBox="0 0 24 24"><path fill="#fff" d="M0 3.5L10.5 2V11.5H0ZM11.5 1.8L24 0V11.5H11.5ZM0 12.5H10.5V22L0 20.5ZM11.5 12.5H24V24L11.5 22.2Z"/></svg></div>
    <div class="tsearch">
      <svg class="ts-ic" viewBox="0 0 26 30"><circle class="w" cx="16" cy="10" r="9"/><path class="w" d="M10 17L2 29"/></svg>
      <span>Type here to search</span>
      <svg class="ts-art" viewBox="0 0 100 50"><path fill="#d8e6ea" stroke="#2e8fb0" stroke-width="2" d="M6 4L62 26L52 54L0 30Z"/><path fill="#e9eef0" stroke="#2e8fb0" stroke-width="2" d="M2 14L60 30L50 60L-2 44Z"/><path stroke="#5a7f95" stroke-width="2" d="M8 22L36 30M6 30L30 36"/><rect x="66" y="9" width="30" height="43" rx="3" fill="#78c6bf"/><path fill="none" stroke="#8a9aa8" stroke-width="3" d="M76 9V2H86V9"/><path stroke="#4ea59d" stroke-width="2" d="M74 14V52M81 14V52M88 14V52"/></svg>
    </div>
    <span class="ti tview"><svg viewBox="0 0 26 42"><path class="w" d="M2 1H8M18 1H24M2 13H18V27H2ZM22 13V17M22 22V27M2 40V36H8M18 36H24V40" transform="scale(1 .95)"/></svg></span>
    <span class="ti gap"><svg viewBox="0 0 36 38"><defs><linearGradient id="ed" x1="0" y1="0" x2="1" y2="1"><stop offset="0" stop-color="#35c1f1"/><stop offset="1" stop-color="#0c59a4"/></linearGradient></defs><path fill="url(#ed)" d="M18 0C30 0 36 9 36 19C36 24 32 26 27 26C21 26 18 24 17 20C13 26 17 36 27 36C23 38 20 38 18 38C7 38 0 30 0 19C0 8 8 0 18 0Z"/><path fill="#5fd05f" d="M36 19C36 9 30 0 18 0C28 4 32 13 28 16C30 20 36 22 36 19Z"/></svg></span>
    <span class="ti"><svg viewBox="0 0 36 38"><path fill="#c99a1e" d="M1 3H15L19 8V14H1Z"/><path fill="#f9d774" d="M1 11H35V36H1Z"/><path fill="#1d78c4" d="M10 24H26V36H22V28H14V36H10Z"/></svg></span>
    <span class="ti"><svg viewBox="0 0 36 46"><path fill="none" stroke="#2eb5f0" stroke-width="2" d="M11 9V2H25V9"/><rect y="8" width="36" height="38" rx="3" fill="#f4f4f4"/><rect x="10" y="19" width="7.5" height="7.5" fill="#f25022"/><rect x="18.5" y="19" width="7.5" height="7.5" fill="#7fba00"/><rect x="10" y="27.5" width="7.5" height="7.5" fill="#00a4ef"/><rect x="18.5" y="27.5" width="7.5" height="7.5" fill="#ffb900"/></svg></span>
    <span class="ti"><svg viewBox="0 0 38 40"><path fill="#35b8f0" d="M18 14L30 2L37 14V38H18Z"/><path fill="#1578c9" d="M18 2H28L37 14H18Z"/><rect y="12" width="20" height="22" rx="2" fill="#0b5fb3"/><text class="olk" x="10" y="29">O</text></svg></span>
    <span class="ti"><svg viewBox="0 0 34 42"><path fill="#f1462c" d="M8 0H26L33 9L30 28L17 42L4 28L1 9Z"/><path fill="#fff" d="M9 10H25L27 16L22 26L17 34L12 26L7 16Z"/><path fill="#f1462c" d="M12 15H15V19H12ZM19 15H22V19H19ZM15 24H19V28H15Z"/></svg></span>
    <span class="ti sticky"><svg viewBox="0 0 32 32"><rect width="32" height="32" rx="1" fill="#ffd600"/><path fill="#5a4a10" d="M32 14V32H17Z"/></svg></span>
    <span class="ti"><svg viewBox="0 0 36 44"><ellipse cx="18" cy="16" rx="16" ry="14" fill="#ddd" stroke="#e2505a" stroke-width="2"/><path stroke="#888" stroke-width="3" d="M12 6L22 30M24 6L15 30"/><circle cx="12" cy="34" r="5" fill="none" stroke="#1e88d0" stroke-width="2.5"/><circle cx="25" cy="36" r="5" fill="none" stroke="#1e88d0" stroke-width="2.5"/></svg></span>
    <span class="ti whats"><svg viewBox="0 0 38 42"><path fill="none" stroke="#2fd05e" stroke-width="4" d="M19 3C8 3 3 12 3 21C3 25 4 28 6 30L3 39L13 36C16 38 18 38 20 38C30 38 35 29 35 21C35 11 29 3 19 3Z"/><path fill="#2fd05e" d="M13 11C10 14 12 20 16 24C20 28 26 29 28 26L24 21L21 23C19 22 17 20 16 17L18 14Z"/></svg><b class="badge99">99+</b></span>
    <span class="ti pbi"><svg viewBox="0 0 28 48"><rect x="0" y="28" width="10" height="20" rx="1" fill="#f9dc72"/><rect x="9" y="14" width="10" height="34" rx="1" fill="#f5c944"/><rect x="17" y="0" width="11" height="48" rx="1" fill="#d4a017"/></svg></span>
    <span class="ti"><svg viewBox="0 0 36 46"><path fill="#7cc4d9" stroke="#cfe3ea" d="M8 6L30 0L36 36L14 44L2 38Z"/><path fill="#cde6ee" d="M8 6L30 0L32 7L10 13Z"/><path fill="#9a7a3a" d="M30 0L36 36L33 38L28 0Z"/></svg></span>
    <span class="ti"><svg viewBox="0 0 36 40"><path fill="#0065a9" d="M27 0L36 5V35L27 40L0 15L4 12L27 29Z"/><path fill="#1e8fe0" d="M27 0L36 5V35L27 40V29V11Z"/><path fill="#007acc" d="M27 11L4 28L0 25L27 0Z"/></svg></span>
    <span class="result"><svg viewBox="0 0 32 50"><ellipse cx="16" cy="25" rx="15" ry="24" fill="#1f6e78"/><path stroke="#3ed0ce" stroke-width="3" fill="none" d="M9 45C4 30 8 12 18 2M16 47C11 30 16 12 25 5M24 44C20 30 24 18 30 13"/></svg><span>Result</span></span>
    <div class="tray">
      <span class="t1"><svg viewBox="0 0 20 12"><path class="w" d="M1 11L10 2L19 11"/></svg></span>
      <span class="t2"><svg viewBox="0 0 18 26"><path class="w" d="M2 5V21H11V5ZM11 12L16 9V17L11 14M4 2H9M4 25H9"/></svg></span>
      <span class="t3"><svg viewBox="0 0 26 22"><path fill="#eee" d="M6 20C0 20 0 12 5 11C5 5 12 3 16 7C22 6 26 11 24 15C26 19 22 20 20 20Z"/></svg></span>
      <span class="t4"><svg viewBox="0 0 26 22"><path class="w" d="M1 2H22V20H1ZM24 8V14"/><rect x="2" y="3" width="8" height="16" fill="#fff"/></svg></span>
      <span class="t5"><svg viewBox="0 0 24 24"><path fill="none" stroke="#aab" stroke-width="1.5" d="M1 20C2 10 10 2 20 1M5 21C6 13 12 6 20 5"/><path class="w" d="M9 22C9 16 14 10 20 10M13 22C13 18 16 15 20 15"/><circle cx="18" cy="21" r="1.8" fill="#fff"/></svg></span>
      <span class="t6"><svg viewBox="0 0 24 28"><path class="w" d="M1 10H6L13 3V25L6 18H1Z"/><path fill="none" stroke="#aab" stroke-width="1.5" d="M16 8C19 11 19 17 16 20M19 4C24 10 24 18 19 24"/></svg></span>
      <span class="clock"><span>8:31 PM</span><span>7/27/2025</span></span>
      <span class="notif"><svg viewBox="0 0 24 26"><path fill="#fff" d="M0 0H24V20H0Z"/><path stroke="#222" stroke-width="1.6" d="M4 6H20M4 10H20M4 14H14"/></svg><b class="badge4">4</b></span>
    </div>
  </div>
</div>
</body>
</html>
```

FILE: styles.css
```css
* { box-sizing: border-box; }
*::after { box-sizing: border-box; }
html, body { margin: 0; padding: 0; background: #111; }
body { font-family: "Open Sans", "Noto Sans", "Liberation Sans", sans-serif; color: #e8e8e8; }
svg { display: block; flex: none; }
i { font-style: normal; }

.app { width: 1916px; height: 1072px; display: flex; flex-direction: column; overflow: hidden; background: #111; }

.w { fill: none; stroke: #e6e6e6; stroke-width: 1.5; }
.g { fill: none; stroke: #c4c4c4; stroke-width: 1.6; }
.dim { fill: none; stroke: #8a8a8a; stroke-width: 1.5; }
.s { fill: none; stroke: #c4c4c4; stroke-width: 1.8; }

/* title bar */
.titlebar { height: 55px; flex: none; display: flex; align-items: center; }
.tb-left { width: 809px; flex: none; display: flex; align-items: center; padding-left: 25px; }
.ic-save { width: 23px; height: 23px; }
.ic-undo { width: 22px; height: 24px; margin-left: 21px; }
.ic-undo + .ic-undo { margin-left: 23px; }
.doc-title { margin-left: 14px; font-size: 17.2px; color: #dcdcdc; white-space: pre; }
.ic-drop { width: 13px; height: 9px; margin-left: 10px; margin-top: -6px; }
.top-search { width: 600px; height: 36px; flex: none; background: #1f1f1f; border-radius: 3px; display: flex; align-items: center; padding-left: 26px; font-size: 18.5px; color: #cfcfcf; }
.ic-tsearch { width: 26px; height: 26px; margin-right: 16px; }
.tb-right { display: flex; align-items: center; margin-left: 191px; }
.signin { font-size: 17.6px; color: #dfe9f2; white-space: nowrap; width: 70px; }
.avatar { width: 30px; height: 30px; border-radius: 50%; background: #3a3a3a; display: block; }
.avatar svg { width: 30px; height: 30px; }
.win-ctl { width: 16px; height: 16px; margin-left: 50px; }
.win-ctl.first { margin-left: 47px; }

/* tabs */
.tabs { height: 50px; flex: none; display: flex; padding-left: 33px; position: relative; }
.tab { margin: 7px 35px 0 0; height: 34px; line-height: 28px; font-size: 20px; color: #dfe6ec; border-bottom: 3px solid transparent; white-space: nowrap; }
.tab.file { font-weight: 600; color: #fff; margin-right: 49px; }
.tab.active { font-weight: 600; color: #fff; border-bottom-color: #2bab93; font-size: 19.6px; margin-right: 34px; }
.tab.t-insert { margin-right: 33px; }
.tab.t-model { margin-right: 37px; }
.share { margin: 2px 5px 0 auto; width: 125px; height: 36px; background: #0e6b5c; border-radius: 4px; display: flex; align-items: center; padding-left: 10px; font-size: 16.5px; color: #cfe6e0; }
.share > svg:first-child { width: 24px; height: 24px; margin-right: 11px; }
.share-chev { width: 13px; height: 10px; margin-left: 6px; }

/* ribbon */
.ribbon { height: 150px; flex: none; width: 1895px; margin-left: 12px; background: #292929; border-radius: 10px; display: flex; padding-top: 6px; font-size: 17px; }
.group { height: 138px; flex: none; border-right: 1px solid #454545; display: flex; flex-direction: column; justify-content: space-between; padding-bottom: 5px; }
.btns { display: flex; height: 105px; }
.g-label { height: 20px; line-height: 20px; font-size: 15px; text-align: center; color: #f0f0f0; }
.g-clip { width: 239px; }
.g-data { width: 538px; }
.g-data .btns { padding-left: 11px; }
.g-query { width: 172px; }
.g-query .btns { padding-left: 13px; }
.g-insert { width: 220px; }
.g-insert .btns { padding-left: 10px; }
.g-calc { width: 279px; }
.g-calc .btns { padding-left: 10px; }
.g-sens { width: 110px; }
.g-share { width: 87px; }
.g-copilot { width: 197px; }
.g-copilot .btns { padding-left: 3px; }
.collapse { flex: 1; display: flex; align-items: flex-end; justify-content: flex-end; padding: 0 11px 15px 0; }
.collapse svg { width: 14px; height: 10px; }

.btn { position: relative; flex: none; display: flex; flex-direction: column; align-items: center; padding-top: 6px; text-align: center; line-height: 24px; color: #f0f0f0; white-space: nowrap; }
.btn .ri { width: 46px; height: 48px; margin-bottom: 4px; }
.dis, .btn.dis { color: #696969; }
.nw { white-space: nowrap; }
.chev { display: inline-block; width: 6px; height: 6px; border-right: 1.4px solid currentColor; border-bottom: 1.4px solid currentColor; transform: rotate(45deg); margin: 0 1px 4px 3px; }
.w46 { width: 46px; } .w50 { width: 50px; } .w52 { width: 52px; } .w62 { width: 62px; } .w66 { width: 66px; } .w68 { width: 68px; } .w74 { width: 74px; } .w76 { width: 76px; } .w84 { width: 84px; } .w90 { width: 90px; } .w94 { width: 94px; } .w116 { width: 116px; } .w126 { width: 126px; } .wfull { width: 100%; }
.focus::after { content: ""; position: absolute; left: 2px; top: 4px; width: 60px; height: 108px; border: 3px solid #fff; }

.b-paste { width: 72px; padding-left: 12px; }
.small-col { display: flex; flex-direction: column; padding: 0 0 0 8px; margin-top: -2px; }
.small { height: 39.5px; flex: none; display: flex; align-items: center; white-space: nowrap; }
.small svg { width: 24px; height: 24px; margin-right: 4px; }

/* main */
.main { height: 730px; flex: none; display: flex; }
.leftnav { width: 61px; flex: none; background: #141414; }
.nav-item { height: 60px; display: flex; align-items: center; padding-left: 17px; border-left: 4px solid transparent; }
.nav-item.on { border-left-color: #2bab93; padding-left: 15px; }
.nav-item svg { width: 23px; height: 23px; margin-top: -3px; }
.nav-item.nav-model { padding-left: 13px; }
.nav-item.nav-model svg { width: 26px; height: 28px; }
.nav-item.nav-doc svg { width: 30px; height: 29px; }
.nav-item.nav-doc { padding-left: 11px; }
.navt { font-family: "Open Sans", sans-serif; font-size: 9.5px; font-weight: 700; fill: #c4c4c4; }

.center { width: 1318px; flex: none; display: flex; flex-direction: column; }
.report-row { height: 676px; display: flex; }
.canvas { width: 1044px; flex: none; position: relative; background: #fff; border-left: 1px solid #555; }

.visual { position: absolute; font-family: Roboto, "Noto Sans", sans-serif; }
.v-hist { left: 3px; top: 1px; width: 545px; height: 334px; }
.v-lines { left: 548px; top: 1px; width: 495px; height: 334px; }
.v-donut { left: 3px; top: 330px; width: 545px; height: 250px; }
.v-map { left: 548px; top: 330px; width: 495px; height: 265px; }
.page-rule { position: absolute; left: 3px; top: 587px; width: 1035px; height: 3px; background: repeating-linear-gradient(90deg, #444 0 3px, transparent 3px 6px); }

.title { font-size: 12px; fill: #333; letter-spacing: .5px; }
.title3 { font-size: 36px; fill: #333; letter-spacing: 2.3px; }
.grid { fill: none; stroke: #ccc; stroke-width: 1; stroke-dasharray: 1 3; }
.grid3 { fill: none; stroke: #c4c4c4; stroke-width: 3; stroke-dasharray: 3 9; }
.axis text { font-size: 10px; fill: #777; }
.axis-title { font-size: 10.5px; fill: #444; letter-spacing: .4px; }
.axis3 text { font-size: 27px; fill: #777; }
.axt3 { font-size: 24px; fill: #444; }
.ar text { text-anchor: end; }
.am, .am text { text-anchor: middle; }
.line3 { fill: none; stroke: #118dff; stroke-width: 6; stroke-linejoin: round; }
.leader { fill: none; stroke: #aaa; stroke-width: 1; }
.dl { font-size: 9.5px; fill: #666; }
.lg-t { font-size: 11px; font-weight: 700; fill: #555; }
.lg { font-size: 10.5px; fill: #666; }
.mapt text { font-family: "Open Sans", sans-serif; font-size: 27.5px; font-weight: 700; fill: #222; }
.ocean text { font-family: "Open Sans", sans-serif; font-size: 26px; fill: #4a68c2; text-anchor: middle; }
.dots circle { fill: #118dff; fill-opacity: .7; stroke: #0a5fd0; stroke-width: 2.5; }
.bing { font-family: "Open Sans", sans-serif; font-size: 19px; fill: #666; }
.attr { font-family: "Open Sans", sans-serif; font-size: 21px; fill: #444; }
.lnk { fill: #5a70c0; text-decoration: underline; }

/* filters */
.filters { width: 274px; flex: none; background: #fff; border-left: 1px solid #aaa; color: #252423; font-size: 17px; }
.f-head { height: 44px; padding: 14px 0 0 12px; display: flex; align-items: center; }
.f-ic { width: 20px; height: 16px; margin: 0 14px 0 7px; }
.f-title { font-size: 21px; font-weight: 600; line-height: 30px; width: 142px; }
.f-eye { width: 16px; height: 12px; }
.f-chev { width: 12px; height: 12px; margin-left: 30px; }
.f-search { margin: 24px 0 0 11px; width: 243px; height: 50px; border: 1px solid #bbb; border-radius: 3px; display: flex; align-items: center; padding-left: 18px; font-size: 17.5px; color: #333; }
.f-search svg { width: 18px; height: 18px; margin-right: 17px; }
.f-rule { height: 1px; background: #bbb; margin-top: 6px; }
.f-label { margin: 25px 0 0 11px; width: 240px; height: 24px; line-height: 24px; display: flex; justify-content: space-between; }
.f-label.second { margin-top: 40px; }
.f-more { font-weight: 700; font-size: 13px; }
.f-well { margin: 13px 0 0 11px; width: 249px; height: 68px; border: 1px solid #444; border-radius: 3px; display: flex; align-items: center; justify-content: center; font-size: 17.3px; }

/* page bar */
.pagebar { height: 54px; flex: none; background: #2a2a2a; border-bottom: 1px solid #5a5a5a; display: flex; }
.views { width: 192px; flex: none; display: flex; align-items: center; border-right: 1px solid #444; border-left: 1px solid #444; padding-left: 15px; }
.view { display: block; width: 36px; height: 53px; padding: 11px 6px 0; }
.view svg { width: 24px; height: 24px; }
.view.on { position: relative; }
.view.on::after { content: ""; position: absolute; left: 0; top: 42px; width: 36px; height: 5px; border-radius: 3px; background: #2bab93; }
.view.phone { margin-left: 39px; width: 18px; padding: 9px 1px 0; }
.view.phone svg { width: 16px; height: 27px; }
.arr { width: 7px; height: 13px; margin-left: 25px; margin-top: -4px; }
.arr.first-arr { margin-left: 31px; }
.page-tab { width: 112px; flex: none; background: #1c1c1c; border-bottom: 6px solid #2bab93; text-align: center; line-height: 53px; font-size: 17px; font-weight: 600; color: #fff; }
.add-page { width: 59px; flex: none; background: #2bab93; display: flex; align-items: center; justify-content: center; margin-left: 1px; padding-bottom: 4px; }
.add-page svg { width: 16px; height: 16px; }

/* panes */
.viz { width: 270px; flex: none; background: #141414; border-left: 1px solid #555; border-right: 1px solid #555; border-bottom: 1px solid #5a5a5a; position: relative; font-size: 17px; color: #f2f2f2; }
.data { flex: 1; background: #141414; border-bottom: 1px solid #5a5a5a; font-size: 17px; color: #f2f2f2; }
.pane-head { height: 46px; padding: 14px 0 0 11px; display: flex; align-items: center; justify-content: space-between; font-size: 22.6px; font-weight: 600; color: #fff; }
.pane-head svg { width: 12px; height: 12px; margin-right: 15px; }
.data .pane-head { padding-left: 13px; }
.data .pane-head svg { margin-right: 11px; }
.build { margin: 12px 0 0 11px; height: 22px; line-height: 22px; font-size: 16.2px; font-weight: 700; color: #fff; }
.build-tabs { margin: 6px 0 0 11px; display: flex; align-items: center; height: 48px; }
.bt-on { width: 48px; height: 48px; background: #2a2a2a; border-radius: 3px; padding: 6px; display: block; }
.bt-on svg { width: 36px; height: 36px; }
.bt-fmt { width: 38px; height: 36px; margin-left: 56px; }
.viz-rule { position: relative; margin-top: 18px; height: 1px; background: #666; }
.viz-rule svg { position: absolute; left: 23px; top: -11px; width: 26px; height: 12px; }
.viz-grid { margin: 9px 0 0 8px; display: grid; grid-template-columns: repeat(6, 42px); grid-auto-rows: 42px; place-items: center; }
.viz-grid svg { width: 28px; height: 28px; overflow: visible; }
.o { fill: none; stroke: #c4c4c4; stroke-width: 1.4; }
.lb { fill: none; stroke: #5aa5e5; stroke-width: 1.5; }
.bf { fill: #1565b5; }
.ls { stroke: #5aa5e5; stroke-width: 1.2; }
.gf { fill: #7a7a7a; stroke: #a5a5a5; stroke-width: 1; }
.n123 { font-family: "Open Sans", sans-serif; font-size: 12px; fill: #4aa3e8; text-anchor: middle; }
.lang { font-family: "Open Sans", sans-serif; font-weight: 600; color: #3a8fd6; line-height: 1; }
.lang.r { font-size: 23px; }
.lang.py { font-size: 26px; }
.viz-more { height: 40px; display: flex; align-items: center; gap: 3px; padding-left: 20px; }
.viz-more i { width: 4px; height: 4px; border-radius: 50%; background: #fff; }
.well-rule { height: 1px; background: #ccc; margin-top: 9px; }
.sec-label { margin: 13px 0 0 17px; line-height: 24px; }
.dash-well { margin: 8px 0 0 5px; width: 255px; height: 41px; border: 1px dashed #666; border-radius: 2px; padding-left: 15px; line-height: 37px; }
.sec-bold { margin: 17px 0 0 17px; line-height: 24px; font-weight: 700; }
.toggle-row { display: flex; align-items: center; justify-content: space-between; width: 219px; margin-left: 17px; height: 24px; }
.toggle-row.r1 { margin-top: 13px; }
.toggle-row.r2 { margin-top: 15px; }
.toggle { width: 48px; height: 24px; border-radius: 12px; display: flex; align-items: center; justify-content: space-between; padding: 0 5px; font-size: 13px; }
.toggle i { width: 12px; height: 12px; border-radius: 50%; }
.toggle.off { border: 1px solid #aaa; color: #aaa; }
.toggle.off i { background: #aaa; }
.toggle.on { background: #2bab93; color: #14463c; }
.toggle.on i { background: #1c2b28; }
.v-scroll { position: absolute; right: 0; top: 509px; width: 9px; height: 166px; border-radius: 5px; background: #aaa; }

.d-search { margin: 22px 0 0 7px; width: 257px; height: 35px; border: 1px solid #777; border-radius: 4px; display: flex; align-items: center; padding-left: 17px; color: #bcbcbc; font-size: 18.5px; }
.d-search svg { width: 22px; height: 22px; margin-right: 10px; }
.d-row { margin: 12px 0 0 26px; height: 24px; display: flex; align-items: center; white-space: nowrap; }
.d-row.first { margin-top: 21px; }
.d-ch { width: 8px; height: 12px; margin-right: 11px; }
.d-tb { width: 18px; height: 18px; margin-right: 8px; }

/* status */
.status { height: 35px; flex: none; display: flex; align-items: center; justify-content: space-between; background: #111; padding-left: 6px; font-size: 16.5px; color: #dde6ec; }
.zoomer { display: flex; align-items: center; padding-right: 24px; }
.zm { width: 11px; color: #ddd; }
.slider { position: relative; width: 150px; height: 2px; background: #ccc; }
.thumb { position: absolute; left: 36px; top: -11px; width: 6px; height: 24px; background: #ccc; }
.tick { position: absolute; left: 75px; top: -5px; width: 2px; height: 12px; background: #ccc; }
.zp { margin-left: 8px; font-size: 22px; line-height: 1; width: 36px; color: #eee; }
.zpct { width: 62px; }
.fit { width: 22px; height: 18px; }

/* taskbar */
.taskbar { flex: 1; display: flex; align-items: stretch; background: linear-gradient(90deg, #1a323c 0, #1f3a44 40%, #234049 70%, #1d3640 100%); border-top: 1px solid #0c0c0c; color: #fff; }
.start { width: 73px; flex: none; display: flex; align-items: center; justify-content: center; padding-top: 3px; }
.start svg { width: 24px; height: 24px; }
.tsearch { width: 431px; flex: none; background: #34536b; border: 1px solid #5b7a8f; border-bottom: 0; display: flex; align-items: center; position: relative; font-size: 21.5px; color: #dbe4ea; padding: 5px 0 0 17px; overflow: hidden; }
.ts-ic { width: 26px; height: 30px; margin-right: 15px; }
.ts-art { position: absolute; left: 320px; top: 3px; width: 100px; height: 50px; overflow: visible; }
.ti { width: 71px; flex: none; display: flex; align-items: center; justify-content: center; position: relative; padding-top: 3px; }
.ti.gap { margin-left: 4px; }
.ti svg { width: 36px; height: 38px; }
.ti.tview svg { width: 26px; height: 40px; }
.ti.sticky svg { width: 32px; height: 32px; }
.whats { z-index: 1; }
.pbi { background: #0f5388; border-right: 4px solid #0d3e66; padding-top: 0; }
.ti.pbi svg { width: 28px; height: 48px; margin-top: 4px; }
.badge99 { position: absolute; left: 29px; top: 28px; width: 42px; height: 23px; border-radius: 20px 20px 0 0; background: #0b4a78; border: 1px solid #6d93ad; border-bottom: 0; text-align: center; font-size: 15.5px; font-weight: 600; line-height: 22px; white-space: nowrap; }
.olk { font-family: "Open Sans", sans-serif; font-size: 17px; font-weight: 700; fill: #fff; text-anchor: middle; }
.xl { font-family: "Open Sans", sans-serif; font-size: 18px; font-weight: 700; fill: #fff; text-anchor: middle; }
.aa { font-family: "Open Sans", sans-serif; font-size: 30px; fill: #4a9ddb; text-anchor: middle; }
.fx { font-family: "Liberation Serif", serif; font-style: italic; font-size: 22px; fill: #777; }
.result { flex: none; width: 141px; padding: 3px 0 0 29px; display: flex; align-items: center; font-size: 19.5px; }
.result svg { width: 32px; height: 46px; margin-right: 15px; }
.tray { flex: 1; display: flex; padding-left: 19px; align-items: center; }
.tray > span { display: flex; align-items: center; justify-content: center; flex: none; height: 51px; padding-top: 3px; }
.tray svg { width: 22px; height: 22px; }
.t1 { width: 36px; } .t2 { width: 36px; } .t3 { width: 36px; } .t4 { width: 36px; } .t5 { width: 38px; } .t6 { width: 28px; }
.t1 svg { width: 20px; height: 12px; }
.t2 svg { width: 18px; height: 26px; }
.t6 svg { width: 24px; height: 28px; }
.tray .clock { width: 114px; flex-direction: column; justify-content: flex-start; padding-top: 2px; font-size: 18px; line-height: 29px; overflow: hidden; color: #eaf0f3; }
.clock span { white-space: nowrap; }
.tray .notif { width: 52px; position: relative; }
.notif svg { width: 24px; height: 26px; margin-top: -6px; }
.badge4 { position: absolute; left: 25px; top: 24px; width: 24px; height: 27px; border-radius: 12px 12px 0 0; background: #0f4f82; border: 1px solid #6d93ad; border-bottom: 0; font-size: 17px; text-align: center; line-height: 26px; }
```
